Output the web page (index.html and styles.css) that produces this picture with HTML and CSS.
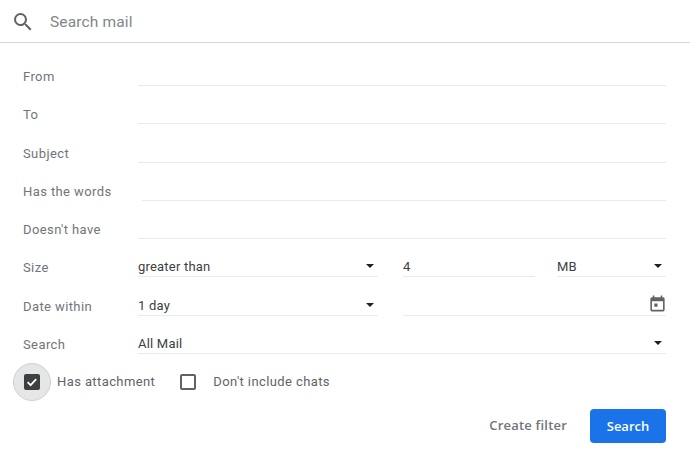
FILE: index.html
```html
<!DOCTYPE html>
<html lang="en">
<head>
    <meta charset="UTF-8">
    <meta name="viewport" content="width=device-width, initial-scale=1.0">
    <title>Search mail</title>
    <link rel="stylesheet" href="styles.css">
</head>
<body>
    <header class="search-bar">
        <svg class="search-icon" width="24" height="24" viewBox="0 0 24 24"><path fill="#5f6368" d="M15.5 14h-.79l-.28-.27A6.47 6.47 0 0 0 16 9.5 6.5 6.5 0 1 0 9.5 16c1.61 0 3.09-.59 4.23-1.57l.27.28v.79l5 4.99L20.49 19l-4.99-5zm-6 0C7.01 14 5 11.99 5 9.5S7.01 5 9.5 5 14 7.01 14 9.5 11.99 14 9.5 14z"/></svg>
        <span class="search-text">Search mail</span>
    </header>

    <form class="filters">
        <div class="row">
            <span class="label">From</span>
            <div class="field"></div>
        </div>
        <div class="row">
            <span class="label">To</span>
            <div class="field"></div>
        </div>
        <div class="row">
            <span class="label">Subject</span>
            <div class="field"></div>
        </div>
        <div class="row">
            <span class="label">Has the words</span>
            <div class="field field-words"></div>
        </div>
        <div class="row">
            <span class="label">Doesn't have</span>
            <div class="field"></div>
        </div>
        <div class="row">
            <span class="label">Size</span>
            <div class="field-group">
                <div class="field select select-main">greater than<i class="caret"></i></div>
                <div class="field size-value">4</div>
                <div class="field select size-unit">MB<i class="caret"></i></div>
            </div>
        </div>
        <div class="row">
            <span class="label">Date within</span>
            <div class="field-group">
                <div class="field select select-main">1 day<i class="caret"></i></div>
                <div class="field date-value">
                    <svg width="19" height="19" viewBox="0 0 24 24"><path fill="#5f6368" d="M19 4h-1V2h-2v2H8V2H6v2H5a2 2 0 0 0-2 2v14a2 2 0 0 0 2 2h14a2 2 0 0 0 2-2V6a2 2 0 0 0-2-2zm0 16H5V9h14v11zM8 12h4v4H8z"/></svg>
                </div>
            </div>
        </div>
        <div class="row">
            <span class="label">Search</span>
            <div class="field select">All Mail<i class="caret"></i></div>
        </div>

        <div class="checks">
            <label class="check">
                <span class="halo">
                    <svg class="box" width="16" height="16" viewBox="0 0 16 16"><rect width="16" height="16" rx="2" fill="#3c4043"/><path d="M3.6 8.2l3 3 5.6-6" fill="none" stroke="#fff" stroke-width="1.8"/></svg>
                </span>
                Has attachment
            </label>
            <label class="check check-chats">
                <span class="empty-box"></span>
                Don't include chats
            </label>
        </div>

        <div class="actions">
            <a href="#" class="create-filter">Create filter</a>
            <button type="button" class="search-button">Search</button>
        </div>
    </form>
</body>
</html>
```

FILE: styles.css
```css
body {
    margin: 0;
    background: #fff;
    font-family: Roboto, "Liberation Sans", sans-serif;
    color: #3c4043;
    overflow: hidden;
}
.search-bar {
    display: flex;
    align-items: center;
    height: 41px;
    padding: 1px 0 0 11px;
    border-bottom: 1px solid #d5d6d7;
}
.search-text {
    margin-left: 15px;
    font-size: 15.5px;
    letter-spacing: 0.15px;
    color: #80868b;
}
.filters {
    padding: 4.75px 24px 0 23px;
}
.row {
    display: flex;
    align-items: stretch;
    height: 38.25px;
    font-size: 13px;
    letter-spacing: 0.2px;
}
.label {
    width: 115px;
    flex-shrink: 0;
    align-self: flex-end;
    padding-bottom: 1px;
    line-height: 17px;
    letter-spacing: 0.4px;
    color: #70757a;
}
.field {
    flex: 1;
    display: flex;
    align-items: flex-end;
    justify-content: space-between;
    padding-bottom: 1px;
    line-height: 17px;
    border-bottom: 1px solid #e8eaed;
    box-sizing: border-box;
}
.field-words {
    margin-left: 4px;
}
.field-group {
    flex: 1;
    display: flex;
}
.select-main {
    flex: none;
    width: 240px;
}
.size-value {
    flex: none;
    width: 132px;
    margin-left: 25px;
}
.size-unit {
    flex: none;
    width: 109px;
    margin-left: 22px;
}
.date-value {
    margin-left: 25px;
    align-items: center;
    padding-bottom: 0;
}
.date-value svg {
    margin-left: auto;
    margin-right: -0.5px;
    margin-top: 16px;
}
.caret {
    width: 0;
    height: 0;
    margin: 0 4px 7px 0;
    border-left: 4px solid transparent;
    border-right: 4px solid transparent;
    border-top: 4px solid #202124;
}
.checks {
    display: flex;
    align-items: center;
    height: 56px;
    margin-left: -10px;
    font-size: 13px;
    letter-spacing: 0.4px;
    color: #5f6368;
}
.check {
    display: flex;
    align-items: center;
}
.halo {
    display: flex;
    align-items: center;
    justify-content: center;
    width: 38px;
    height: 38px;
    margin-right: 6px;
    border: 1px solid #d0d0d0;
    border-radius: 50%;
    background: #e6e6e6;
    box-sizing: border-box;
}
.check-chats {
    margin-left: 25px;
}
.empty-box {
    width: 12px;
    height: 12px;
    margin-right: 17px;
    border: 2px solid #5f6368;
    border-radius: 2px;
}
.actions {
    display: flex;
    align-items: center;
    justify-content: flex-end;
    margin-top: -1px;
}
.create-filter {
    margin-right: 23px;
    margin-bottom: 2px;
    font-family: "Open Sans", Roboto, sans-serif;
    font-size: 13px;
    font-weight: 600;
    letter-spacing: 0.2px;
    color: #70757a;
    text-decoration: none;
}
.search-button {
    width: 76px;
    height: 34px;
    border: none;
    border-radius: 4px;
    background: #1a73e8;
    color: #fff;
    font-family: "Open Sans", Roboto, sans-serif;
    font-size: 13px;
    font-weight: 600;
}
```
